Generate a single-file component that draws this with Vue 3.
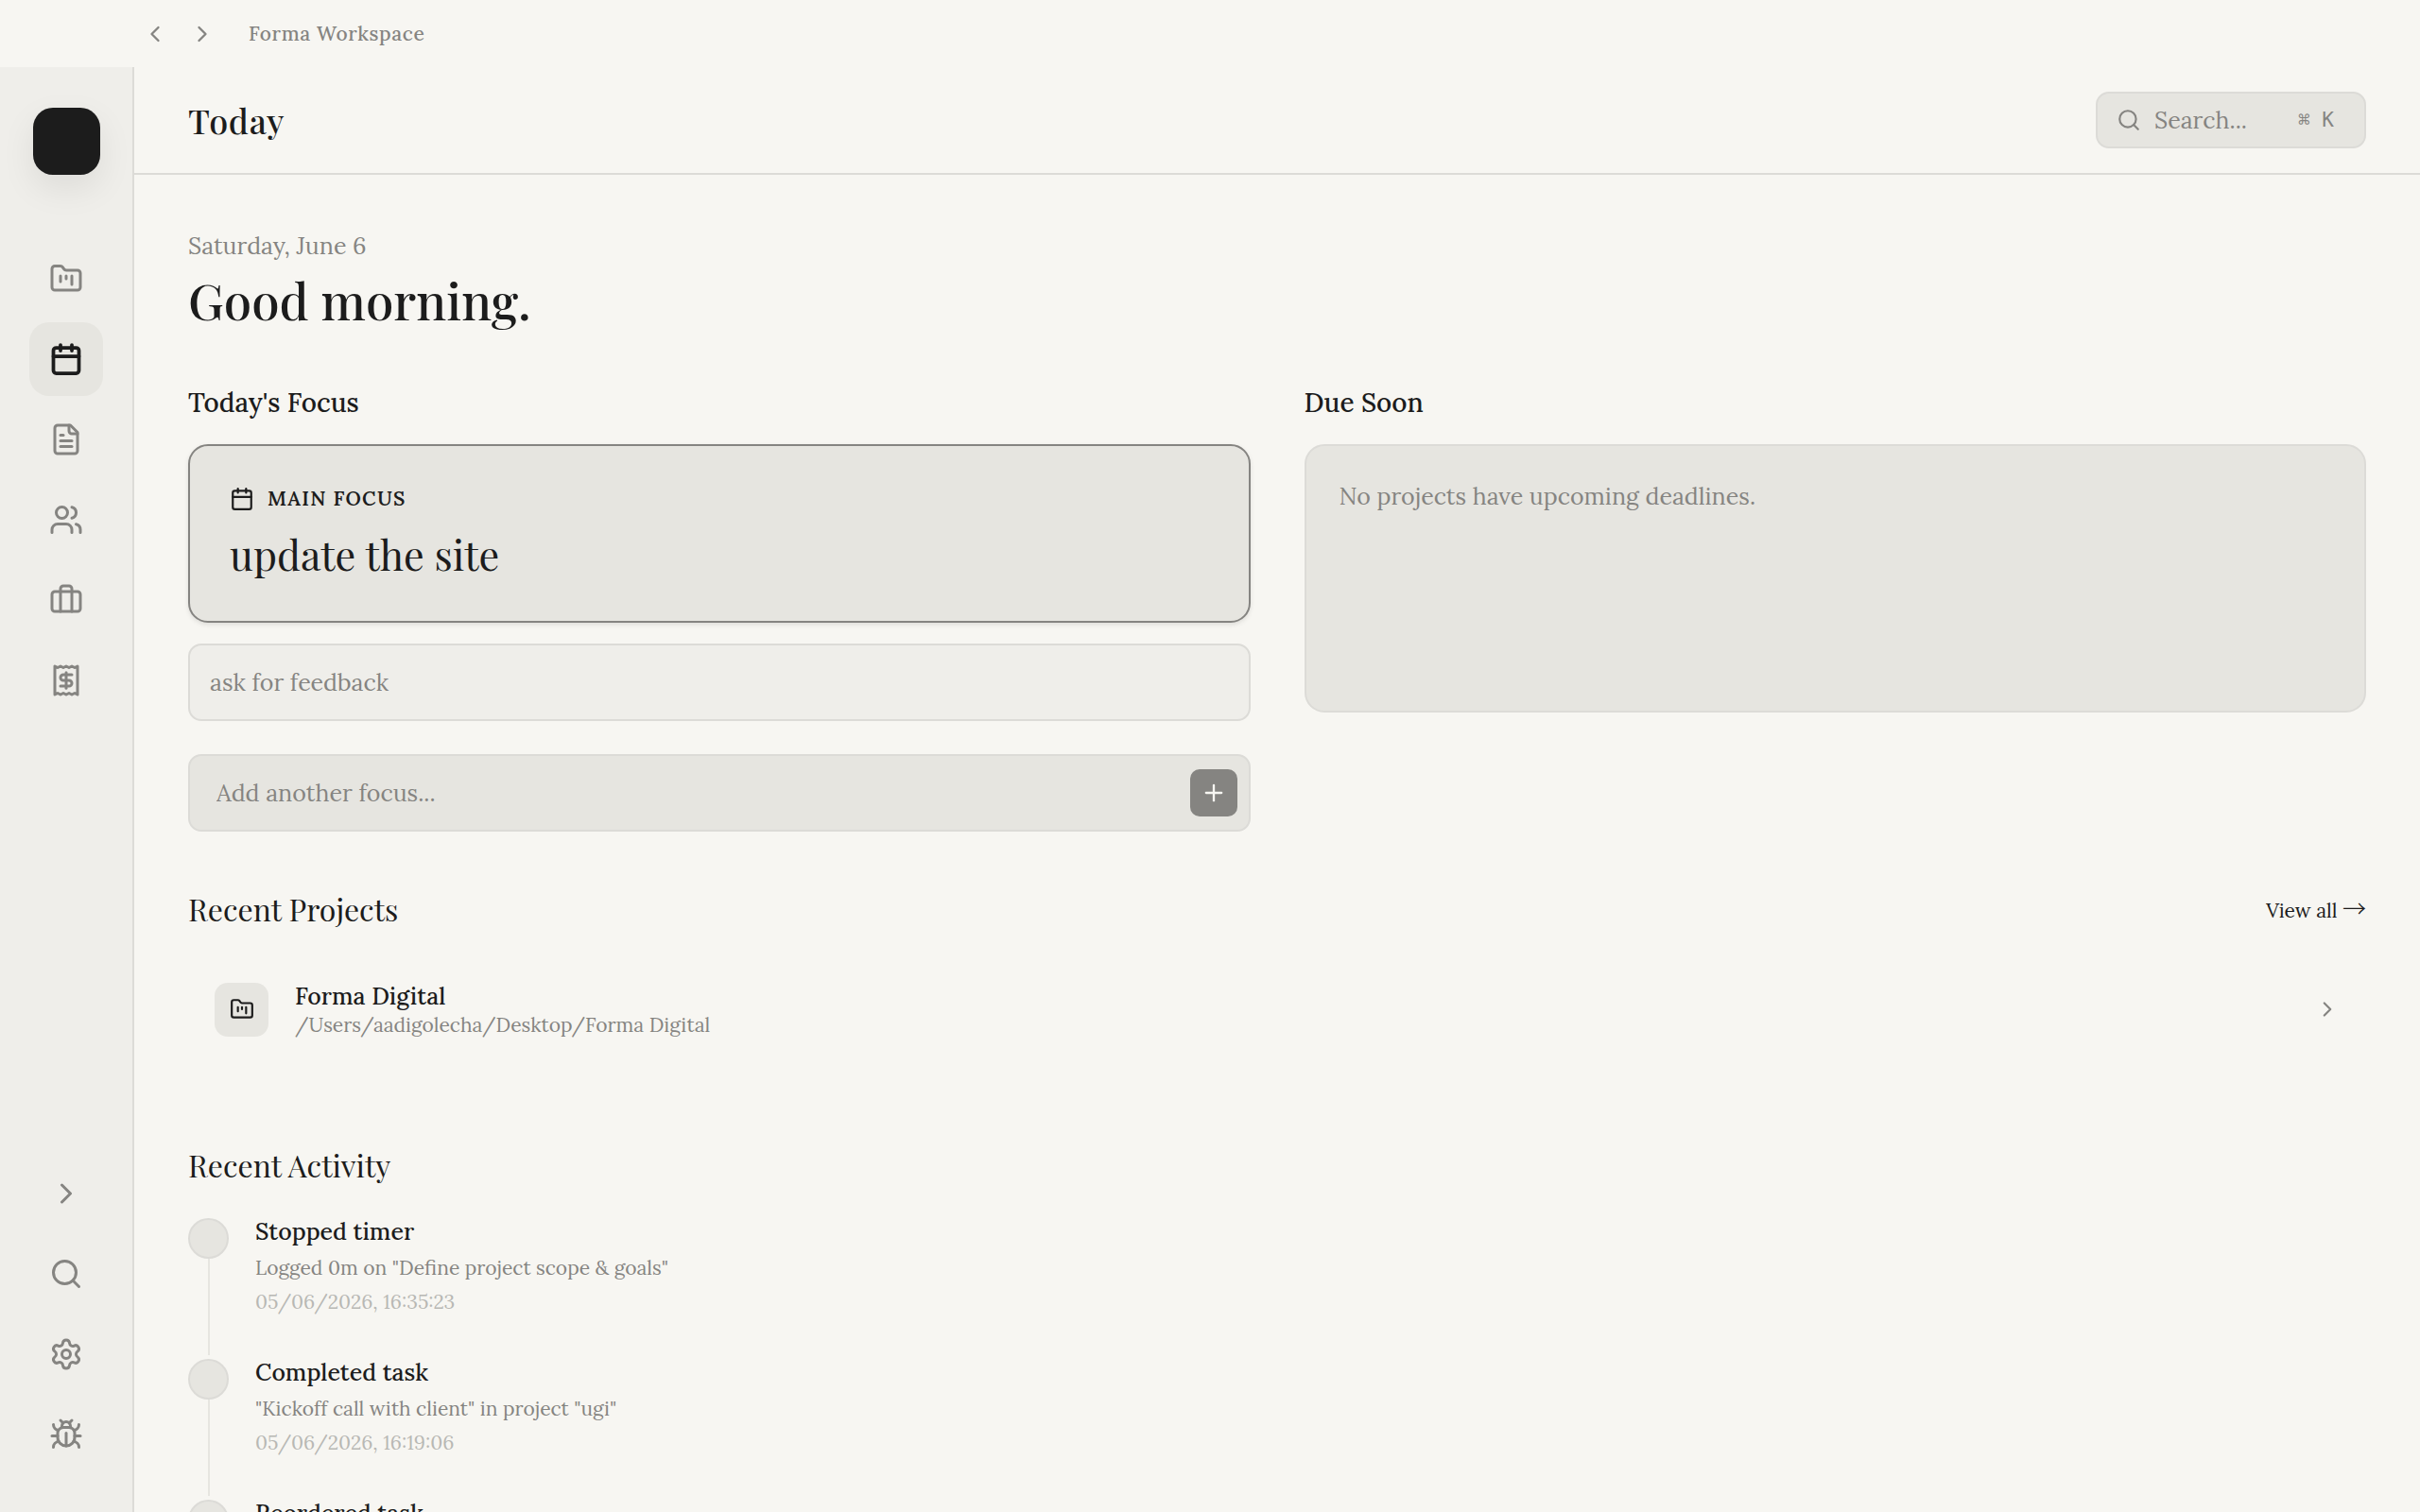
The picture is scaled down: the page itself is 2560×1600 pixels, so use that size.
<template>
    <div class="app">
        <div class="titlebar">
            <button class="titlebar-btn" aria-label="Back">
                <svg class="icon icon-28" viewBox="0 0 24 24" v-html="icons.chevronLeft" />
            </button>
            <button class="titlebar-btn" aria-label="Forward">
                <svg class="icon icon-28" viewBox="0 0 24 24" v-html="icons.chevronRight" />
            </button>
            <span class="titlebar-name">Forma Workspace</span>
        </div>

        <div class="shell">
            <aside class="sidebar">
                <div class="logo"></div>
                <nav class="nav">
                    <button v-for="item in navItems" :key="item.id" :class="['nav-btn', { active: item.id === current }]"
                        :aria-label="item.label" @click="current = item.id">
                        <svg class="icon icon-36" viewBox="0 0 24 24" v-html="icons[item.icon]" />
                    </button>
                </nav>
                <div class="nav nav-bottom">
                    <button v-for="item in toolItems" :key="item.id" class="nav-btn" :aria-label="item.label">
                        <svg class="icon icon-36" viewBox="0 0 24 24" v-html="icons[item.icon]" />
                    </button>
                </div>
            </aside>

            <div class="page">
                <header class="page-header">
                    <h1 class="page-title">Today</h1>
                    <label class="search">
                        <svg class="icon icon-26" viewBox="0 0 24 24" v-html="icons.search" />
                        <input v-model="query" class="search-input" type="text" placeholder="Search..."
                            aria-label="Search">
                        <kbd class="search-kbd">⌘ K</kbd>
                    </label>
                </header>

                <main class="content">
                    <p class="date">Saturday, June 6</p>
                    <h2 class="greeting">Good morning.</h2>

                    <div class="columns">
                        <section>
                            <h3 class="column-title">Today's Focus</h3>
                            <div class="focus-main">
                                <div class="focus-label">
                                    <svg class="icon icon-26" viewBox="0 0 24 24" v-html="icons.calendar" />
                                    <span>Main Focus</span>
                                </div>
                                <p class="focus-title">{{ focus[0] }}</p>
                            </div>
                            <div v-for="item in focus.slice(1)" :key="item" class="focus-item">{{ item }}</div>
                            <form class="focus-form" @submit.prevent="addFocus">
                                <input v-model="newFocus" class="focus-input" type="text"
                                    placeholder="Add another focus..." aria-label="Add another focus">
                                <button class="focus-add" type="submit" aria-label="Add">
                                    <svg class="icon icon-28" viewBox="0 0 24 24" v-html="icons.plus" />
                                </button>
                            </form>
                        </section>

                        <section>
                            <h3 class="column-title">Due Soon</h3>
                            <div class="due-card">No projects have upcoming deadlines.</div>
                        </section>
                    </div>

                    <section class="projects">
                        <div class="section-head">
                            <h3 class="section-title">Recent Projects</h3>
                            <a href="#" class="view-all">View all <span class="arrow">→</span></a>
                        </div>
                        <a v-for="project in projects" :key="project.path" href="#" class="project">
                            <span class="project-icon">
                                <svg class="icon icon-26" viewBox="0 0 24 24" v-html="icons.folder" />
                            </span>
                            <span class="project-text">
                                <span class="project-name">{{ project.name }}</span>
                                <span class="project-path">{{ project.path }}</span>
                            </span>
                            <svg class="icon icon-26 project-arrow" viewBox="0 0 24 24" v-html="icons.chevronRight" />
                        </a>
                    </section>

                    <section class="activity">
                        <h3 class="section-title">Recent Activity</h3>
                        <ul class="timeline">
                            <li v-for="entry in activity" :key="entry.title" class="entry">
                                <div class="entry-rail">
                                    <span class="entry-dot"></span>
                                    <span class="entry-line"></span>
                                </div>
                                <div class="entry-body">
                                    <p class="entry-title">{{ entry.title }}</p>
                                    <p class="entry-detail">{{ entry.detail }}</p>
                                    <p class="entry-time">{{ entry.time }}</p>
                                </div>
                            </li>
                        </ul>
                    </section>
                </main>
            </div>
        </div>
    </div>
</template>

<script setup>
import { ref } from 'vue'

const icons = {
    chevronLeft: '<path d="m15 18-6-6 6-6"/>',
    chevronRight: '<path d="m9 18 6-6-6-6"/>',
    plus: '<path d="M5 12h14"/><path d="M12 5v14"/>',
    search: '<circle cx="11" cy="11" r="8"/><path d="m21 21-4.3-4.3"/>',
    folder: '<path d="M4 20h16a2 2 0 0 0 2-2V8a2 2 0 0 0-2-2h-7.93a2 2 0 0 1-1.66-.9l-.82-1.2A2 2 0 0 0 7.93 3H4a2 2 0 0 0-2 2v13c0 1.1.9 2 2 2Z"/><path d="M8 10v4"/><path d="M12 10v2"/><path d="M16 10v6"/>',
    calendar: '<path d="M8 2v4"/><path d="M16 2v4"/><rect width="18" height="18" x="3" y="4" rx="2"/><path d="M3 10h18"/>',
    file: '<path d="M15 2H6a2 2 0 0 0-2 2v16a2 2 0 0 0 2 2h12a2 2 0 0 0 2-2V7Z"/><path d="M14 2v4a2 2 0 0 0 2 2h4"/><path d="M10 9H8"/><path d="M16 13H8"/><path d="M16 17H8"/>',
    users: '<path d="M16 21v-2a4 4 0 0 0-4-4H6a4 4 0 0 0-4 4v2"/><circle cx="9" cy="7" r="4"/><path d="M22 21v-2a4 4 0 0 0-3-3.87"/><path d="M16 3.13a4 4 0 0 1 0 7.75"/>',
    briefcase: '<path d="M16 20V4a2 2 0 0 0-2-2h-4a2 2 0 0 0-2 2v16"/><rect width="20" height="14" x="2" y="6" rx="2"/>',
    receipt: '<path d="M4 2v20l2-1 2 1 2-1 2 1 2-1 2 1 2-1 2 1V2l-2 1-2-1-2 1-2-1-2 1-2-1-2 1Z"/><path d="M16 8h-6a2 2 0 1 0 0 4h4a2 2 0 1 1 0 4H8"/><path d="M12 17.5v-11"/>',
    settings: '<path d="M9.671 4.136a2.34 2.34 0 0 1 4.659 0 2.34 2.34 0 0 0 3.319 1.915 2.34 2.34 0 0 1 2.33 4.033 2.34 2.34 0 0 0 0 3.831 2.34 2.34 0 0 1-2.33 4.033 2.34 2.34 0 0 0-3.319 1.915 2.34 2.34 0 0 1-4.659 0 2.34 2.34 0 0 0-3.32-1.915 2.34 2.34 0 0 1-2.33-4.033 2.34 2.34 0 0 0 0-3.831A2.34 2.34 0 0 1 6.35 6.051a2.34 2.34 0 0 0 3.319-1.915"/><circle cx="12" cy="12" r="3"/>',
    bug: '<path d="M12 20v-9"/><path d="M14 7a4 4 0 0 1 4 4v3a6 6 0 0 1-12 0v-3a4 4 0 0 1 4-4z"/><path d="M14.12 3.88 16 2"/><path d="M21 21a4 4 0 0 0-3.81-4"/><path d="M21 5a4 4 0 0 1-3.55 3.97"/><path d="M22 13h-4"/><path d="M3 21a4 4 0 0 1 3.81-4"/><path d="M3 5a4 4 0 0 0 3.55 3.97"/><path d="M6 13H2"/><path d="m8 2 1.88 1.88"/><path d="M9 7.13V6a3 3 0 1 1 6 0v1.13"/>'
}

const navItems = [
    { id: 'projects', label: 'Projects', icon: 'folder' },
    { id: 'today', label: 'Today', icon: 'calendar' },
    { id: 'documents', label: 'Documents', icon: 'file' },
    { id: 'clients', label: 'Clients', icon: 'users' },
    { id: 'business', label: 'Business', icon: 'briefcase' },
    { id: 'invoices', label: 'Invoices', icon: 'receipt' }
]

const toolItems = [
    { id: 'expand', label: 'Expand sidebar', icon: 'chevronRight' },
    { id: 'search', label: 'Search', icon: 'search' },
    { id: 'settings', label: 'Settings', icon: 'settings' },
    { id: 'bug', label: 'Report a bug', icon: 'bug' }
]

const projects = [
    { name: 'Forma Digital', path: '/Users/aadigolecha/Desktop/Forma Digital' }
]

const activity = [
    { title: 'Stopped timer', detail: 'Logged 0m on "Define project scope & goals"', time: '05/06/2026, 16:35:23' },
    { title: 'Completed task', detail: '"Kickoff call with client" in project "ugi"', time: '05/06/2026, 16:19:06' },
    { title: 'Reordered task', detail: '', time: '' }
]

const current = ref('today')
const query = ref('')
const newFocus = ref('')
const focus = ref(['update the site', 'ask for feedback'])

const addFocus = () => {
    const text = newFocus.value.trim()
    if (!text) return
    focus.value.push(text)
    newFocus.value = ''
}
</script>

<style>
body {
    margin: 0;
    background: #f7f6f2;
}
</style>

<style scoped>
.app {
    --bg: #f7f6f2;
    --panel: #efeeea;
    --card: #e6e5e0;
    --line: #dcdbd7;
    --text: #1c1c1c;
    --muted: #858481;
    --body-font: Lora, "Liberation Serif", serif;
    --display-font: "Playfair Display", "Liberation Serif", serif;
    display: flex;
    flex-direction: column;
    height: 100vh;
    overflow: hidden;
    background: var(--bg);
    color: var(--text);
    font-family: var(--body-font);
    font-size: 25px;
    line-height: 36px;
}

.app *,
.app *::before {
    box-sizing: border-box;
}

h1,
h2,
h3,
p,
ul {
    margin: 0;
    padding: 0;
    font-weight: 400;
}

button {
    display: flex;
    align-items: center;
    justify-content: center;
    padding: 0;
    border: none;
    background: transparent;
    color: var(--muted);
    cursor: pointer;
}

input {
    flex: 1;
    min-width: 0;
    padding: 0;
    border: none;
    outline: none;
    background: transparent;
    color: var(--text);
    font: inherit;
}

input::placeholder {
    color: var(--muted);
    opacity: 1;
}

a {
    color: inherit;
    text-decoration: none;
}

.icon {
    display: block;
    flex-shrink: 0;
    fill: none;
    stroke: currentColor;
    stroke-width: 2;
    stroke-linecap: round;
    stroke-linejoin: round;
}

.icon-26 {
    width: 26px;
    height: 26px;
}

.icon-28 {
    width: 28px;
    height: 28px;
}

.icon-36 {
    width: 36px;
    height: 36px;
}

/* Title bar */
.titlebar {
    display: flex;
    align-items: center;
    flex-shrink: 0;
    gap: 7px;
    height: 71px;
    padding-left: 142px;
}

.titlebar-btn {
    width: 43px;
    height: 43px;
}

.titlebar-name {
    margin-left: 21px;
    color: var(--muted);
    font-size: 21px;
    font-weight: 500;
    line-height: 32px;
    letter-spacing: 0.03em;
}

.shell {
    display: flex;
    flex: 1;
    min-height: 0;
}

/* Sidebar */
.sidebar {
    display: flex;
    flex-direction: column;
    align-items: center;
    flex-shrink: 0;
    width: 142px;
    padding: 43px 0;
    border-right: 2px solid var(--line);
    background: var(--panel);
}

.logo {
    width: 71px;
    height: 71px;
    margin-bottom: 71px;
    border-radius: 21px;
    background: var(--text);
    box-shadow: 0 14px 36px rgba(0, 0, 0, 0.08);
}

.nav {
    display: flex;
    flex-direction: column;
    gap: 7px;
}

.nav-bottom {
    margin-top: auto;
}

.nav-btn {
    width: 78px;
    height: 78px;
    border-radius: 21px;
}

.nav-btn.active {
    background: var(--card);
    color: var(--text);
}

.nav-btn.active .icon {
    stroke-width: 2.5;
}

/* Page header */
.page {
    display: flex;
    flex: 1;
    flex-direction: column;
    min-width: 0;
}

.page-header {
    display: flex;
    align-items: center;
    justify-content: space-between;
    flex-shrink: 0;
    height: 114px;
    padding: 0 57px;
    border-bottom: 2px solid var(--line);
}

.page-title {
    font-family: var(--display-font);
    font-size: 36px;
    font-weight: 500;
    line-height: 48px;
    letter-spacing: 0.02em;
}

.search {
    display: flex;
    align-items: center;
    gap: 14px;
    width: 286px;
    height: 60px;
    padding: 0 32px 0 20px;
    border: 2px solid var(--line);
    border-radius: 14px;
    background: var(--card);
    color: var(--muted);
}

.search-kbd {
    font-family: "DejaVu Sans Mono", "Liberation Mono", monospace;
    font-size: 21px;
    line-height: 28px;
}

/* Content */
.content {
    flex: 1;
    min-height: 0;
    padding: 57px;
    overflow-y: auto;
    scrollbar-width: none;
}

.date {
    color: var(--muted);
}

.greeting {
    font-family: var(--display-font);
    font-size: 53px;
    font-weight: 500;
    line-height: 78px;
}

.columns {
    display: grid;
    grid-template-columns: 1fr 1fr;
    gap: 57px;
    margin-top: 48px;
}

.column-title {
    margin-bottom: 22px;
    font-size: 28px;
    font-weight: 500;
    line-height: 44px;
}

.focus-main {
    padding: 40px 42px;
    border: 2px solid var(--muted);
    border-radius: 21px;
    background: var(--card);
    box-shadow: 0 2px 5px rgba(0, 0, 0, 0.1);
}

.focus-label {
    display: flex;
    align-items: center;
    gap: 14px;
    font-size: 21px;
    font-weight: 600;
    line-height: 32px;
    letter-spacing: 0.06em;
    text-transform: uppercase;
}

.focus-title {
    margin-top: 11px;
    font-family: var(--display-font);
    font-size: 43px;
    line-height: 62px;
}

.focus-item {
    margin-top: 22px;
    padding: 21px;
    border: 2px solid var(--line);
    border-radius: 14px;
    background: var(--panel);
    color: var(--muted);
}

.focus-form {
    display: flex;
    align-items: center;
    margin-top: 35px;
    padding: 14px 12px 14px 28px;
    border: 2px solid var(--line);
    border-radius: 14px;
    background: var(--card);
}

.focus-add {
    width: 50px;
    height: 50px;
    border-radius: 10px;
    background: var(--muted);
    color: var(--bg);
}

.due-card {
    min-height: 284px;
    padding: 35px;
    border: 2px solid var(--line);
    border-radius: 21px;
    background: var(--card);
    color: var(--muted);
}

/* Recent projects */
.projects {
    margin-top: 58px;
}

.section-head {
    display: flex;
    align-items: center;
    justify-content: space-between;
    margin-bottom: 23px;
}

.section-title {
    font-family: var(--display-font);
    font-size: 32px;
    line-height: 48px;
}

.view-all {
    font-size: 21px;
    line-height: 32px;
}

.arrow {
    font-family: "Noto Sans CJK JP", sans-serif;
    font-size: 25px;
    font-weight: 300;
}

.project {
    display: flex;
    align-items: center;
    gap: 28px;
    padding: 28px;
}

.project-icon {
    display: flex;
    align-items: center;
    justify-content: center;
    width: 57px;
    height: 57px;
    border-radius: 14px;
    background: var(--card);
}

.project-text {
    display: flex;
    flex: 1;
    flex-direction: column;
}

.project-name {
    font-weight: 500;
    line-height: 34px;
}

.project-path {
    color: var(--muted);
    font-size: 21px;
    line-height: 28px;
}

.project-arrow {
    color: var(--muted);
}

/* Recent activity */
.activity {
    margin-top: 82px;
}

.timeline {
    margin-top: 28px;
    list-style: none;
}

.entry {
    display: flex;
    gap: 28px;
}

.entry-rail {
    display: flex;
    flex-direction: column;
    align-items: center;
    padding-top: 4px;
}

.entry-dot {
    width: 43px;
    height: 43px;
    border: 2px solid var(--line);
    border-radius: 50%;
    background: var(--card);
}

.entry-line {
    flex: 1;
    width: 2px;
    background: var(--card);
}

.entry-body {
    padding-bottom: 39px;
}

.entry-title {
    font-weight: 500;
}

.entry-detail {
    margin-top: 4px;
    color: var(--muted);
    font-size: 21px;
    line-height: 34px;
}

.entry-time {
    margin-top: 2px;
    color: #b8b8b4;
    font-size: 21px;
    line-height: 34px;
}
</style>
